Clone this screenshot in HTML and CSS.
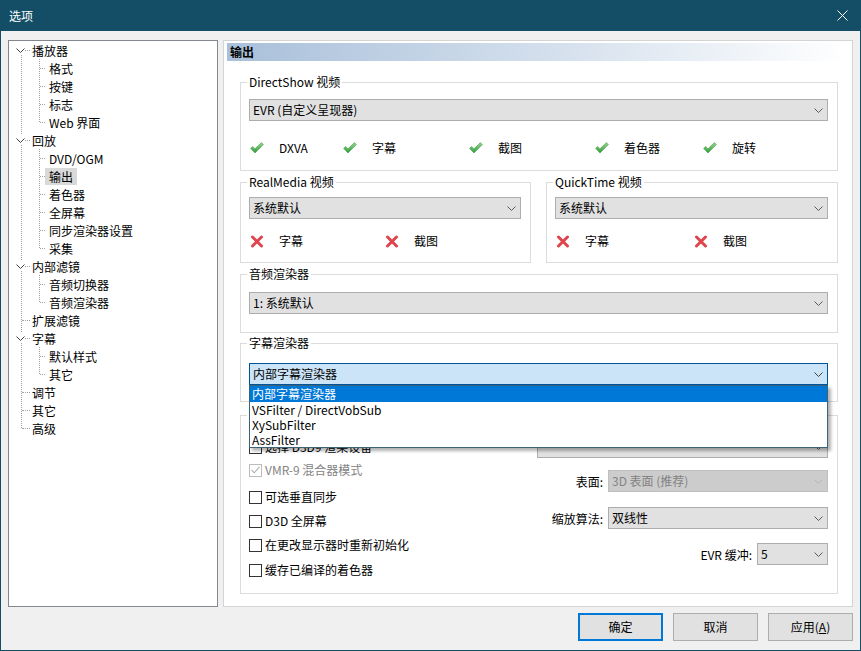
FILE: index.html
```html
<!DOCTYPE html>
<html lang="zh-CN">
<head>
<meta charset="utf-8">
<title>选项</title>
<link rel="stylesheet" href="styles.css">
</head>
<body>
<svg class="defs" width="0" height="0" aria-hidden="true">
  <defs>
    <linearGradient id="ckg" x1="0" y1="0" x2="0" y2="1">
      <stop offset="0" stop-color="#9ad98f"/>
      <stop offset="1" stop-color="#2f9a3c"/>
    </linearGradient>
  </defs>
</svg>
<div class="window">
  <div class="titlebar">
    <span class="title">选项</span>
    <svg class="close" width="11" height="11" viewBox="0 0 11 11"><path d="M0.5 0.5 L10.5 10.5 M10.5 0.5 L0.5 10.5" stroke="#ffffff" stroke-width="1" fill="none"/></svg>
  </div>
  <div class="body">
    <div class="main">
      <div class="tree">
        <div class="tlist">
          <div class="row top"><span class="chev"><svg width="9" height="5" viewBox="0 0 9 5"><path d="M0.5 0.5 L4.5 4.5 L8.5 0.5" fill="none" stroke="#404040"/></svg></span><span class="lbl">播放器</span></div>
          <div class="kids">
            <div class="row kid"><span class="lbl">格式</span></div>
            <div class="row kid"><span class="lbl">按键</span></div>
            <div class="row kid"><span class="lbl">标志</span></div>
            <div class="row kid"><span class="lbl">Web 界面</span></div>
          </div>
          <div class="row top"><span class="chev"><svg width="9" height="5" viewBox="0 0 9 5"><path d="M0.5 0.5 L4.5 4.5 L8.5 0.5" fill="none" stroke="#404040"/></svg></span><span class="lbl">回放</span></div>
          <div class="kids">
            <div class="row kid"><span class="lbl">DVD/OGM</span></div>
            <div class="row kid"><span class="lbl sel">输出</span></div>
            <div class="row kid"><span class="lbl">着色器</span></div>
            <div class="row kid"><span class="lbl">全屏幕</span></div>
            <div class="row kid"><span class="lbl">同步渲染器设置</span></div>
            <div class="row kid"><span class="lbl">采集</span></div>
          </div>
          <div class="row top"><span class="chev"><svg width="9" height="5" viewBox="0 0 9 5"><path d="M0.5 0.5 L4.5 4.5 L8.5 0.5" fill="none" stroke="#404040"/></svg></span><span class="lbl">内部滤镜</span></div>
          <div class="kids">
            <div class="row kid"><span class="lbl">音频切换器</span></div>
            <div class="row kid"><span class="lbl">音频渲染器</span></div>
          </div>
          <div class="row top"><span class="lbl">扩展滤镜</span></div>
          <div class="row top"><span class="chev"><svg width="9" height="5" viewBox="0 0 9 5"><path d="M0.5 0.5 L4.5 4.5 L8.5 0.5" fill="none" stroke="#404040"/></svg></span><span class="lbl">字幕</span></div>
          <div class="kids">
            <div class="row kid"><span class="lbl">默认样式</span></div>
            <div class="row kid"><span class="lbl">其它</span></div>
          </div>
          <div class="row top"><span class="lbl">调节</span></div>
          <div class="row top"><span class="lbl">其它</span></div>
          <div class="row top"><span class="lbl">高级</span></div>
        </div>
      </div>

      <div class="page">
        <div class="page-header">输出</div>
        <div class="groups">
          <fieldset class="grp grp-ds">
            <legend>DirectShow 视频</legend>
            <div class="combo"><span>EVR (自定义呈现器)</span><svg class="cv" width="9" height="5" viewBox="0 0 9 5"><path d="M0.5 0.5 L4.5 4.5 L8.5 0.5" fill="none" stroke="#5a5a5a"/></svg></div>
            <div class="caps caps-ds">
              <div class="cap"><svg class="ck" width="14" height="12" viewBox="0 0 14 12"><path d="M0.6 6.4 L2.6 4.4 L5 6.8 L11.4 0.6 L13.4 2.6 L5 11 Z" fill="url(#ckg)" stroke="#44a04c" stroke-width="0.6"/></svg><span>DXVA</span></div>
              <div class="cap"><svg class="ck" width="14" height="12" viewBox="0 0 14 12"><path d="M0.6 6.4 L2.6 4.4 L5 6.8 L11.4 0.6 L13.4 2.6 L5 11 Z" fill="url(#ckg)" stroke="#44a04c" stroke-width="0.6"/></svg><span>字幕</span></div>
              <div class="cap"><svg class="ck" width="14" height="12" viewBox="0 0 14 12"><path d="M0.6 6.4 L2.6 4.4 L5 6.8 L11.4 0.6 L13.4 2.6 L5 11 Z" fill="url(#ckg)" stroke="#44a04c" stroke-width="0.6"/></svg><span>截图</span></div>
              <div class="cap"><svg class="ck" width="14" height="12" viewBox="0 0 14 12"><path d="M0.6 6.4 L2.6 4.4 L5 6.8 L11.4 0.6 L13.4 2.6 L5 11 Z" fill="url(#ckg)" stroke="#44a04c" stroke-width="0.6"/></svg><span>着色器</span></div>
              <div class="cap"><svg class="ck" width="14" height="12" viewBox="0 0 14 12"><path d="M0.6 6.4 L2.6 4.4 L5 6.8 L11.4 0.6 L13.4 2.6 L5 11 Z" fill="url(#ckg)" stroke="#44a04c" stroke-width="0.6"/></svg><span>旋转</span></div>
            </div>
          </fieldset>

          <div class="grp-row">
            <fieldset class="grp grp-half grp-rm">
              <legend>RealMedia 视频</legend>
              <div class="combo"><span>系统默认</span><svg class="cv" width="9" height="5" viewBox="0 0 9 5"><path d="M0.5 0.5 L4.5 4.5 L8.5 0.5" fill="none" stroke="#5a5a5a"/></svg></div>
              <div class="caps caps-rm">
                <div class="cap"><svg class="xx" width="14" height="13" viewBox="0 0 14 13"><path d="M2.5 2 L11.5 11 M11.5 2 L2.5 11" stroke="#e0454e" stroke-width="3" stroke-linecap="round" fill="none"/></svg><span>字幕</span></div>
                <div class="cap"><svg class="xx" width="14" height="13" viewBox="0 0 14 13"><path d="M2.5 2 L11.5 11 M11.5 2 L2.5 11" stroke="#e0454e" stroke-width="3" stroke-linecap="round" fill="none"/></svg><span>截图</span></div>
              </div>
            </fieldset>
            <fieldset class="grp grp-half grp-qt">
              <legend>QuickTime 视频</legend>
              <div class="combo"><span>系统默认</span><svg class="cv" width="9" height="5" viewBox="0 0 9 5"><path d="M0.5 0.5 L4.5 4.5 L8.5 0.5" fill="none" stroke="#5a5a5a"/></svg></div>
              <div class="caps caps-qt">
                <div class="cap"><svg class="xx" width="14" height="13" viewBox="0 0 14 13"><path d="M2.5 2 L11.5 11 M11.5 2 L2.5 11" stroke="#e0454e" stroke-width="3" stroke-linecap="round" fill="none"/></svg><span>字幕</span></div>
                <div class="cap"><svg class="xx" width="14" height="13" viewBox="0 0 14 13"><path d="M2.5 2 L11.5 11 M11.5 2 L2.5 11" stroke="#e0454e" stroke-width="3" stroke-linecap="round" fill="none"/></svg><span>截图</span></div>
              </div>
            </fieldset>
          </div>

          <fieldset class="grp grp-audio">
            <legend>音频渲染器</legend>
            <div class="combo"><span>1: 系统默认</span><svg class="cv" width="9" height="5" viewBox="0 0 9 5"><path d="M0.5 0.5 L4.5 4.5 L8.5 0.5" fill="none" stroke="#5a5a5a"/></svg></div>
          </fieldset>

          <fieldset class="grp grp-sub">
            <legend>字幕渲染器</legend>
            <div class="combo focus"><span>内部字幕渲染器</span><svg class="cv" width="9" height="5" viewBox="0 0 9 5"><path d="M0.5 0.5 L4.5 4.5 L8.5 0.5" fill="none" stroke="#404040"/></svg>
              <ul class="droplist">
                <li class="hi">内部字幕渲染器</li>
                <li>VSFilter / DirectVobSub</li>
                <li>XySubFilter</li>
                <li>AssFilter</li>
              </ul>
            </div>
          </fieldset>

          <fieldset class="grp grp-d3d">
            <legend>Direct3D 9 渲染设置</legend>
            <div class="d3d">
              <div class="d3d-left">
                <div class="chk"><span class="box"></span><span>选择 D3D9 渲染设备</span></div>
                <div class="chk dis"><span class="box"><svg width="9" height="8" viewBox="0 0 9 8"><path d="M0.5 4 L3.3 6.8 L8.5 0.8" fill="none" stroke="#b0b0b0" stroke-width="1.1"/></svg></span><span>VMR-9 混合器模式</span></div>
                <div class="chk"><span class="box"></span><span>可选垂直同步</span></div>
                <div class="chk"><span class="box"></span><span>D3D 全屏幕</span></div>
                <div class="chk"><span class="box"></span><span>在更改显示器时重新初始化</span></div>
                <div class="chk"><span class="box"></span><span>缓存已编译的着色器</span></div>
              </div>
              <div class="d3d-right">
                <div class="combo dev"><span></span><svg class="cv" width="9" height="5" viewBox="0 0 9 5"><path d="M0.5 0.5 L4.5 4.5 L8.5 0.5" fill="none" stroke="#5a5a5a"/></svg></div>
                <div class="field f-surf"><span>表面:</span><div class="combo dis w220"><span>3D 表面 (推荐)</span><svg class="cv" width="9" height="5" viewBox="0 0 9 5"><path d="M0.5 0.5 L4.5 4.5 L8.5 0.5" fill="none" stroke="#b4b4b4"/></svg></div></div>
                <div class="field f-scale"><span>缩放算法:</span><div class="combo w220"><span>双线性</span><svg class="cv" width="9" height="5" viewBox="0 0 9 5"><path d="M0.5 0.5 L4.5 4.5 L8.5 0.5" fill="none" stroke="#5a5a5a"/></svg></div></div>
                <div class="field f-evr"><span>EVR 缓冲:</span><div class="combo w71"><span>5</span><svg class="cv" width="9" height="5" viewBox="0 0 9 5"><path d="M0.5 0.5 L4.5 4.5 L8.5 0.5" fill="none" stroke="#5a5a5a"/></svg></div></div>
              </div>
            </div>
          </fieldset>
        </div>
      </div>
    </div>
    <div class="buttons">
      <button class="btn default">确定</button>
      <button class="btn">取消</button>
      <button class="btn">应用(<u>A</u>)</button>
    </div>
  </div>
</div>
</body>
</html>
```

FILE: styles.css
```css
* { box-sizing: border-box; }

html, body {
  margin: 0;
  padding: 0;
}

body {
  width: 861px;
  height: 651px;
  overflow: hidden;
  font-family: "Noto Sans CJK SC", "Microsoft YaHei", sans-serif;
  font-size: 12px;
  color: #000;
  background: #f0f0f0;
}

.defs { position: absolute; width: 0; height: 0; }

.window {
  width: 861px;
  height: 651px;
  border: 1px solid #134e66;
  border-top: 0;
  display: flex;
  flex-direction: column;
  background: #f0f0f0;
}

.titlebar {
  height: 31px;
  margin: 0 -1px;
  background: #134e66;
  color: #fff;
  display: flex;
  align-items: center;
  justify-content: space-between;
  padding: 0 13px 0 9px;
  line-height: 16px;
}

.close { display: block; }

.body {
  flex: 1;
  padding: 9px 7px 9px;
  display: flex;
  flex-direction: column;
}

.main {
  height: 567px;
  display: flex;
  gap: 5px;
}

/* ---------- tree ---------- */
.tree {
  width: 211px;
  border: 1px solid #828790;
  background: #fff;
}

.tlist { position: relative; }

.tlist::before {
  content: "";
  position: absolute;
  left: 12px;
  top: 9px;
  bottom: 9px;
  border-left: 1px dotted #a0a0a0;
}

.row {
  position: relative;
  height: 18px;
  display: flex;
  align-items: center;
  line-height: 17px;
  white-space: nowrap;
}

.row::before {
  content: "";
  position: absolute;
  top: 9px;
  border-top: 1px dotted #a0a0a0;
}

.row.top { padding-left: 19px; }
.row.top::before { left: 13px; width: 8px; }

.row.kid { padding-left: 36px; }
.row.kid::before { left: 31px; width: 5px; }

.lbl { padding: 0 4px; }
.lbl.sel { background: #d9d9d9; }

.kids { position: relative; }
.kids::before {
  content: "";
  position: absolute;
  left: 30px;
  top: 0;
  bottom: 9px;
  border-left: 1px dotted #a0a0a0;
}

.chev {
  position: absolute;
  left: 6px;
  top: 4px;
  width: 10px;
  height: 10px;
  background: #fff;
  display: flex;
  align-items: center;
  justify-content: center;
  z-index: 1;
}
.chev svg { display: block; }

/* ---------- page ---------- */
.page {
  flex: 1;
  border: 1px solid #d4d4d4;
  background: #fff;
  padding: 2px 3px;
}

.page-header {
  height: 18px;
  line-height: 18px;
  padding-left: 3px;
  font-weight: bold;
  background: linear-gradient(to right, #a9c0da 0%, #d2deec 50%, #ffffff 100%);
}

.groups {
  padding: 0 11px 0 13px;
}

.grp {
  margin: 0;
  padding: 0 9px 0 8px;
  border: 1px solid #dcdcdc;
  min-width: 0;
}

.grp legend {
  padding: 0 2px;
  margin-left: -2px;
  line-height: 16px;
  font-size: 12px;
}

.grp-ds { margin-top: 13px; padding-top: 9px; padding-bottom: 12px; }

.grp-row {
  display: flex;
  gap: 15px;
  margin-top: 3px;
}
.grp-half { padding-top: 7px; padding-bottom: 11px; }
.grp-rm { width: 291px; }
.grp-qt { width: 292px; }

.grp-audio { margin-top: 3px; padding-top: 10px; padding-bottom: 18px; }
.grp-sub { margin-top: 2px; padding-top: 12px; padding-bottom: 16px; position: relative; z-index: 5; }
.grp-d3d { margin-top: 5px; padding-top: 0; padding-bottom: 13px; }

/* combo box */
.combo {
  position: relative;
  height: 22px;
  border: 1px solid #adadad;
  background: #e1e1e1;
  display: flex;
  align-items: center;
  justify-content: space-between;
  padding: 0 4px 0 3px;
  line-height: 20px;
  white-space: nowrap;
}
.combo .cv { display: block; flex: none; }

.combo.focus {
  background: #cce4f7;
  border-color: #005499;
}

.combo.dis {
  background: #cccccc;
  border-color: #bfbfbf;
  color: #838383;
}

.w220 { width: 220px; }
.w71 { width: 71px; }

.droplist {
  position: absolute;
  top: 21px;
  left: -1px;
  right: -1px;
  margin: 0;
  padding: 0;
  list-style: none;
  background: #fff;
  border: 1px solid #3d6378;
  box-shadow: 3px 3px 3px rgba(0, 0, 0, 0.3);
  color: #000;
}
.droplist li {
  height: 15px;
  line-height: 15px;
  padding-left: 2px;
}
.droplist li.hi {
  height: 16px;
  line-height: 16px;
  background: #0078d7;
  color: #fff;
}

/* capability rows */
.caps {
  display: grid;
  height: 20px;
  align-items: center;
}
.caps-ds { grid-template-columns: 93px 126px 126px 108px 1fr; margin-top: 17px; }
.caps-rm { grid-template-columns: 135px 1fr; margin-top: 12px; }
.caps-qt { grid-template-columns: 138px 1fr; margin-top: 12px; }

.cap {
  display: flex;
  align-items: center;
  gap: 15px;
  padding-left: 1px;
  line-height: 20px;
}
.cap svg { display: block; flex: none; }

/* D3D group */
.d3d {
  display: flex;
  justify-content: space-between;
}

.d3d-left {
  display: flex;
  flex-direction: column;
  padding-top: 14px;
}

.chk {
  display: flex;
  align-items: center;
  gap: 3px;
  height: 20px;
  line-height: 20px;
  white-space: nowrap;
}
.chk:nth-child(2) { margin-top: 3px; }
.chk:nth-child(3) { margin-top: 7px; }
.chk:nth-child(4) { margin-top: 4px; }
.chk:nth-child(5) { margin-top: 4px; }
.chk:nth-child(6) { margin-top: 5px; }

.box {
  width: 13px;
  height: 13px;
  border: 1px solid #333333;
  background: #fff;
  display: flex;
  align-items: center;
  justify-content: center;
  flex: none;
}
.box svg { display: block; }
.chk.dis { color: #838383; }
.chk.dis .box { border-color: #bcbcbc; }

.d3d-right {
  display: flex;
  flex-direction: column;
  align-items: flex-end;
  padding-top: 13px;
}

.combo.dev { width: 291px; }

.field {
  display: flex;
  align-items: center;
  gap: 5px;
  white-space: nowrap;
}
.f-surf { margin-top: 12px; }
.f-scale { margin-top: 15px; }
.f-evr { margin-top: 14px; }

/* ---------- buttons ---------- */
.buttons {
  margin-top: 6px;
  display: flex;
  justify-content: flex-end;
  gap: 10px;
}

.btn {
  width: 85px;
  height: 28px;
  padding: 0;
  margin: 0;
  border: 1px solid #adadad;
  background: #e1e1e1;
  font-family: inherit;
  font-size: 12px;
  color: #000;
  line-height: 20px;
}
.btn.default {
  border: 2px solid #0078d7;
}
.btn u { text-decoration: underline; }
```
